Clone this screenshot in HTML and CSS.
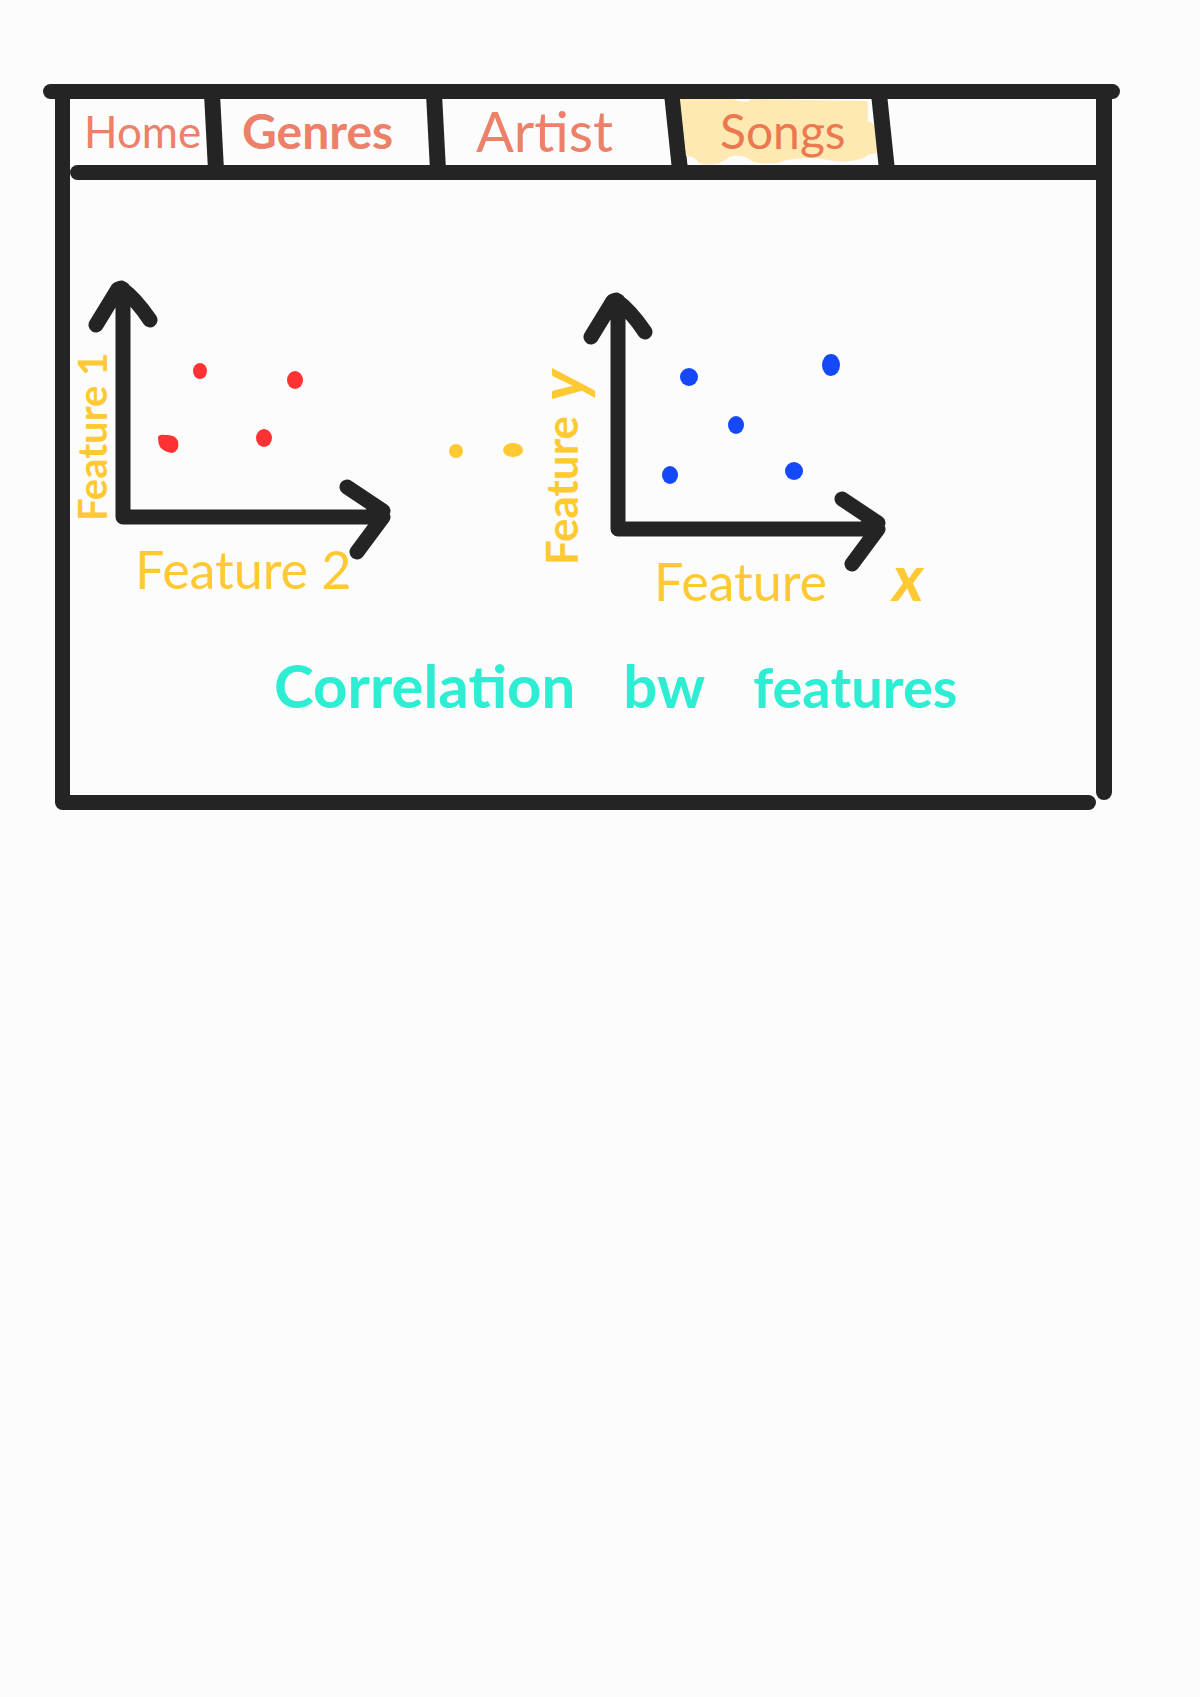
FILE: index.html
```html
<!DOCTYPE html>
<html lang="en">
<head>
<meta charset="utf-8">
<meta name="viewport" content="width=device-width, initial-scale=1">
<title>Songs</title>
<link rel="stylesheet" href="styles.css">
</head>
<body>
<div class="sheet">
  <div class="top-bar"></div>
  <div class="frame">
    <div class="left-post"></div>
    <div class="panel">
      <nav>
        <ul class="tabs">
          <li class="tab"><a class="tab-link home" href="#home">Home</a></li>
          <li class="tab"><a class="tab-link genres" href="#genres">Genres</a></li>
          <li class="tab steep"><a class="tab-link artist" href="#artist">Artist</a></li>
          <li class="tab steep current">
            <svg class="highlight" viewBox="0 0 204 66" preserveAspectRatio="none" aria-hidden="true">
              <path d="M-4 0H49Q58 5 68 0L181 2V22Q188 24 188 30L194 54Q182 54 177 59Q160 65 142 61Q126 57 101 61Q88 67 68 63Q58 54 45 58Q32 69 14 64Q12 57 2 57Z"/>
            </svg>
            <a class="tab-link songs" href="#songs" aria-current="page">Songs</a>
          </li>
        </ul>
      </nav>
      <div class="nav-line"></div>
      <main>
        <div class="plots">
          <figure class="plot">
            <div class="y-label">Feature 1</div>
            <svg class="chart" viewBox="30 0 278 257" role="img" aria-label="Feature 1 against Feature 2">
              <path class="axis" d="M38 9V237H296M11 45L33 9L36 8Q51 19 65 40M262 207L298 231M298 237L272 272M33 9L38 20L45 16M288 232L298 237"/>
              <g class="red">
                <ellipse cx="115" cy="91" rx="7" ry="8"/>
                <ellipse cx="210" cy="100" rx="8" ry="9"/>
                <path d="M73 158Q73 154 80 155Q90 154 93 161Q95 171 87 173Q79 172 75 167Q73 163 73 158Z"/>
                <ellipse cx="179" cy="158" rx="8" ry="9"/>
              </g>
            </svg>
            <figcaption class="x-label">Feature 2</figcaption>
          </figure>
          <svg class="more" viewBox="0 0 74 16" role="img" aria-label="More plots">
            <ellipse cx="7" cy="8" rx="7" ry="7"/>
            <ellipse cx="64" cy="7" rx="10" ry="7"/>
          </svg>
          <figure class="plot wide">
            <div class="y-label">Feature <span class="variable">y</span></div>
            <svg class="chart" viewBox="30 0 278 257" role="img" aria-label="Feature y against Feature x">
              <path class="axis" d="M38 9V237H296M11 45L33 9L36 8Q51 19 65 40M262 207L298 231M298 237L272 272M33 9L38 20L45 16M288 232L298 237"/>
              <g class="blue">
                <ellipse cx="109" cy="85" rx="9" ry="9"/>
                <ellipse cx="251" cy="73" rx="9" ry="11"/>
                <ellipse cx="156" cy="133" rx="8" ry="9"/>
                <ellipse cx="90" cy="183" rx="8" ry="9"/>
                <ellipse cx="214" cy="179" rx="9" ry="9"/>
              </g>
            </svg>
            <figcaption class="x-label">Feature <span class="variable">x</span></figcaption>
          </figure>
        </div>
        <h1 class="title"><span>Correlation</span> <span>bw</span> <span class="small">features</span></h1>
      </main>
    </div>
    <div class="right-post"></div>
    <div class="bottom-bar"></div>
  </div>
</div>
</body>
</html>
```
FILE: styles.css
```css
* { box-sizing: border-box; }

body {
  margin: 0;
  background: #fcfcfc;
  font-family: Lato, "Open Sans", sans-serif;
}

.sheet { padding: 84px 80px 84px 43px; }

.top-bar {
  height: 15px;
  border-radius: 8px;
  background: #242424;
}

.frame {
  display: grid;
  grid-template-columns: 15px 1fr 16px;
  grid-template-rows: auto 15px;
  margin: 0 8px 0 12px;
}

.left-post { background: #242424; }

.right-post {
  grid-row: 1 / 3;
  grid-column: 3;
  margin-bottom: 10px;
  background: #242424;
  border-radius: 0 0 8px 8px;
}

.bottom-bar {
  grid-row: 2;
  grid-column: 1 / 3;
  background: #242424;
  border-radius: 0 8px 8px 8px;
}

.tabs {
  display: grid;
  grid-template-columns: 152fr 222fr 240fr 207fr 205fr;
  height: 66px;
  margin: 0;
  padding: 0;
  list-style: none;
}

.tab {
  position: relative;
  display: flex;
}

.tab::after {
  content: "";
  width: 16px;
  background: #242424;
  transform: skewX(3deg);
}

.tab.steep::after { transform: skewX(6deg); }

.tab-link {
  flex: 1;
  position: relative;
  line-height: 64px;
  text-decoration: none;
  color: #ec8069;
  white-space: nowrap;
}

.home { padding-left: 14px; font-size: 44px; }
.genres { padding-left: 20px; font-size: 48px; font-weight: 700; }
.artist { padding-left: 32px; font-size: 56px; }
.songs { padding-left: 36px; font-size: 48px; color: #ec7850; }

.highlight {
  position: absolute;
  inset: 0;
  width: 100%;
  height: 100%;
  fill: #ffe9b3;
  overflow: visible;
}

.nav-line {
  height: 15px;
  background: #242424;
  border-radius: 8px 0 0 8px;
}

main { padding: 100px 0 68px; }

.plots {
  display: flex;
  align-items: flex-start;
}

.plot {
  display: grid;
  grid-template-columns: 45px auto;
  margin: 0;
  color: #ffc933;
}

.plot.wide {
  grid-template-columns: 85px auto;
  margin: 12px 0 0 2px;
}

.y-label {
  writing-mode: vertical-rl;
  transform: rotate(180deg);
  font-size: 40px;
  line-height: 44px;
  font-weight: 700;
  padding-top: 16px;
  white-space: nowrap;
}

.wide .y-label {
  position: relative;
  z-index: 1;
  grid-row: 1 / 3;
  font-size: 44px;
  line-height: 72px;
  padding-top: 48px;
}

.chart {
  display: block;
  width: 278px;
  height: 257px;
  overflow: visible;
}

.axis {
  fill: none;
  stroke: #242424;
  stroke-width: 15px;
  stroke-linecap: round;
  stroke-linejoin: round;
}

.red { fill: #ff3233; }
.blue { fill: #1448fa; }

.x-label {
  grid-column: 2;
  padding-left: 20px;
  font-size: 52px;
  line-height: 64px;
  white-space: nowrap;
}

.wide .x-label { padding-left: 44px; }

.variable {
  font-size: 64px;
  font-style: italic;
  font-weight: 700;
}

.y-label .variable { margin-top: 4px; }
.x-label .variable { margin-left: 52px; line-height: 48px; }

.more {
  width: 74px;
  height: 16px;
  margin: 163px 0 0 56px;
  fill: #ffc933;
}

.title {
  display: flex;
  align-items: baseline;
  gap: 48px;
  margin: 32px 0 0;
  padding-left: 204px;
  font-size: 60px;
  line-height: 80px;
  font-weight: 700;
  color: #2deed3;
}

.title .small { font-size: 56px; }
```
